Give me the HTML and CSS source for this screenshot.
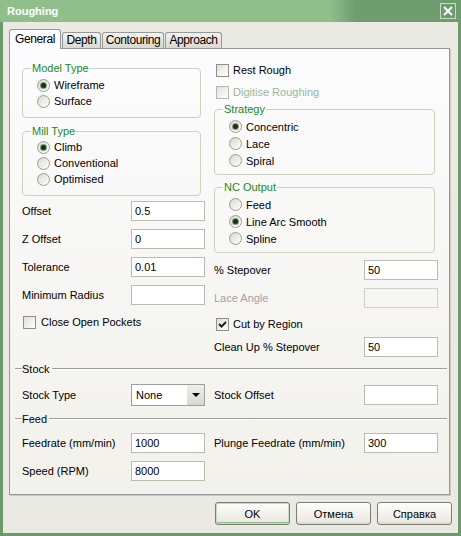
FILE: index.html
```html
<!DOCTYPE html>
<html lang="en">
<head>
    <meta charset="UTF-8">
    <title>Roughing</title>
    <link rel="stylesheet" href="styles.css">
</head>
<body>
<div class="window">
    <div class="titlebar">
        <span class="title">Roughing</span>
        <div class="close-btn">
            <svg width="10" height="10" viewBox="0 0 10 10"><path d="M1 1 L9 9 M9 1 L1 9" stroke="#fff" stroke-width="2"/></svg>
        </div>
    </div>

    <div class="frame">
        <div class="tabs">
            <div class="tab active t-general">General</div>
            <div class="tab t-depth">Depth</div>
            <div class="tab t-contour">Contouring</div>
            <div class="tab t-approach">Approach</div>
        </div>

        <div class="page">
            <div class="cols">
                <!-- left column -->
                <div class="col col-left">
                    <fieldset class="group group-left">
                        <legend>Model Type</legend>
                        <div class="opt"><span class="radio checked"></span>Wireframe</div>
                        <div class="opt"><span class="radio"></span>Surface</div>
                    </fieldset>

                    <fieldset class="group group-left group-mill">
                        <legend>Mill Type</legend>
                        <div class="opt"><span class="radio checked"></span>Climb</div>
                        <div class="opt"><span class="radio"></span>Conventional</div>
                        <div class="opt"><span class="radio"></span>Optimised</div>
                    </fieldset>

                    <div class="field mt5"><span>Offset</span><div class="edit">0.5</div></div>
                    <div class="field mt8"><span>Z Offset</span><div class="edit">0</div></div>
                    <div class="field mt8"><span>Tolerance</span><div class="edit">0.01</div></div>
                    <div class="field mt8"><span>Minimum Radius</span><div class="edit"></div></div>

                    <div class="opt check mt9"><span class="box"></span>Close Open Pockets</div>
                </div>

                <!-- right column -->
                <div class="col col-right">
                    <div class="opt check"><span class="box"></span>Rest Rough</div>
                    <div class="opt check mt6 dim-green"><span class="box box-off"></span>Digitise Roughing</div>

                    <fieldset class="group group-right mt3">
                        <legend>Strategy</legend>
                        <div class="opt"><span class="radio checked"></span>Concentric</div>
                        <div class="opt"><span class="radio"></span>Lace</div>
                        <div class="opt"><span class="radio"></span>Spiral</div>
                    </fieldset>

                    <fieldset class="group group-right mt6">
                        <legend>NC Output</legend>
                        <div class="opt"><span class="radio"></span>Feed</div>
                        <div class="opt"><span class="radio checked"></span>Line Arc Smooth</div>
                        <div class="opt"><span class="radio"></span>Spline</div>
                    </fieldset>

                    <div class="field mt7"><span>% Stepover</span><div class="edit">50</div></div>
                    <div class="field mt8 dim"><span>Lace Angle</span><div class="edit off"></div></div>

                    <div class="opt check mt8">
                        <span class="box"><svg width="9" height="9" viewBox="0 0 9 9"><path d="M1 4 L3.5 6.5 L8 2" stroke="#1b2a18" stroke-width="2" fill="none"/></svg></span>Cut by Region
                    </div>
                    <div class="field mt5"><span>Clean Up % Stepover</span><div class="edit">50</div></div>
                </div>
            </div>

            <div class="sep mt5"><span>Stock</span></div>
            <div class="row mt9">
                <div class="field tall">
                    <span>Stock Type</span>
                    <div class="combo"><span class="combo-text">None</span><span class="combo-btn"></span></div>
                </div>
                <div class="field tall"><span>Stock Offset</span><div class="edit"></div></div>
            </div>

            <div class="sep mt6"><span>Feed</span></div>
            <div class="row mt8">
                <div class="field"><span>Feedrate (mm/min)</span><div class="edit">1000</div></div>
                <div class="field"><span>Plunge Feedrate (mm/min)</span><div class="edit">300</div></div>
            </div>
            <div class="row mt8">
                <div class="field"><span>Speed (RPM)</span><div class="edit">8000</div></div>
                <div></div>
            </div>
        </div>

        <div class="buttons">
            <div class="btn default">OK</div>
            <div class="btn">Отмена</div>
            <div class="btn">Справка</div>
        </div>
    </div>
</div>
</body>
</html>
```

FILE: styles.css
```css
body {
    margin: 0;
    font-family: "Liberation Sans", Arial, sans-serif;
    font-size: 11px;
    color: #000;
}

.window {
    width: 461px;
    height: 536px;
    display: flex;
    flex-direction: column;
}

/* title bar */
.titlebar {
    height: 22px;
    flex: none;
    display: flex;
    align-items: center;
    justify-content: space-between;
    padding: 0 5px 0 7px;
    background: linear-gradient(to right, #90bf8c 0, #90bf8c 330px, #6e9c6e 356px, #6e9c6e 100%);
}

.title {
    color: #fff;
    font-weight: bold;
}

.close-btn {
    width: 16px;
    height: 16px;
    box-sizing: border-box;
    border: 1px solid #c7dcc5;
    display: flex;
    align-items: center;
    justify-content: center;
}

.frame {
    flex: 1;
    border: 3px solid #6d9a6d;
    border-top: 0;
    background: #ebeae2;
    padding: 7px 0 0 6px;
}

/* tabs */
.tabs {
    display: flex;
    align-items: flex-start;
    height: 20px;
}

.tab {
    height: 16px;
    box-sizing: border-box;
    margin-top: 3px;
    margin-left: 1px;
    border: 1px solid #919b9c;
    border-bottom: 0;
    border-radius: 3px 3px 0 0;
    background: linear-gradient(#f3f2ec, #dbd9ce);
    text-align: center;
    line-height: 15px;
    font-size: 12px;
    letter-spacing: -0.4px;
}

.tab.active {
    height: 20px;
    margin-top: 0;
    margin-left: 0;
    background: #fcfcfe;
    line-height: 18px;
    position: relative;
    z-index: 1;
}

.t-general { width: 52px; }
.t-depth { width: 39px; }
.t-contour { width: 62px; }
.t-approach { width: 57px; }

/* tab page */
.page {
    width: 441px;
    height: 447px;
    box-sizing: border-box;
    margin-top: -1px;
    border: 1px solid #919b9c;
    box-shadow: 1px 1px 0 #cdcabb;
    background: linear-gradient(#fcfcfe, #f2f1eb);
    padding: 13px 11px 0 12px;
}

.cols, .row {
    display: grid;
    grid-template-columns: 183px 224px;
    column-gap: 9px;
    align-items: start;
}

.row {
    align-items: center;
}

.col {
    display: flex;
    flex-direction: column;
}

/* group boxes */
.group {
    margin: 0;
    box-sizing: border-box;
    border: 1px solid #d0d0bf;
    border-radius: 4px;
    padding: 2px 0 8px 14px;
}

.group legend {
    color: #1a8a1a;
    padding: 0 1px;
    margin-left: -6px;
    line-height: 13px;
}

.group-left { width: 179px; }
.group-mill { margin-top: 7px; padding-top: 1px; }
.group-right { width: 221px; padding-bottom: 5px; }

/* radio / check rows */
.opt {
    display: flex;
    align-items: center;
    height: 16px;
}

.col-right .group .opt {
    height: 17px;
}

.radio {
    width: 13px;
    height: 13px;
    flex: none;
    box-sizing: border-box;
    border: 1px solid #9d9c93;
    border-radius: 50%;
    background: linear-gradient(135deg, #d9d8ce, #fff);
    margin-right: 4px;
    position: relative;
}

.radio.checked::after {
    content: "";
    position: absolute;
    left: 3px;
    top: 3px;
    width: 5px;
    height: 5px;
    border-radius: 50%;
    background: #1c2f1a;
    box-shadow: 0 0 0 1px #7f9e79;
}

.check {
    padding-left: 2px;
}

.col-left .check {
    padding-left: 1px;
}

.box {
    width: 13px;
    height: 13px;
    flex: none;
    box-sizing: border-box;
    border: 1px solid #8f8f8a;
    background: linear-gradient(135deg, #e0dfd8, #fff);
    margin-right: 4px;
    display: flex;
    align-items: center;
    justify-content: center;
}

.col-left .box {
    margin-right: 5px;
}

.box-off {
    border-color: #b7b8b0;
}

.dim-green { color: #98b896; }
.dim { color: #a3a39c; }

/* label + edit rows */
.field {
    display: flex;
    align-items: center;
    justify-content: space-between;
    height: 20px;
}

.field.tall {
    height: 22px;
}

.edit {
    width: 74px;
    height: 20px;
    box-sizing: border-box;
    border: 1px solid #b9bdb0;
    background: #fff;
    padding-left: 3px;
    line-height: 18px;
}

.edit.off {
    background: transparent;
    border-color: #cfd0c6;
}

.combo {
    width: 74px;
    height: 22px;
    box-sizing: border-box;
    border: 1px solid #9da19a;
    background: #fff;
    display: flex;
}

.combo-text {
    flex: 1;
    padding-left: 4px;
    line-height: 20px;
}

.combo-btn {
    width: 17px;
    background: linear-gradient(#efeee9, #d9d8cf);
    display: flex;
    align-items: center;
    justify-content: center;
}

.combo-btn::after {
    content: "";
    border-left: 4px solid transparent;
    border-right: 4px solid transparent;
    border-top: 4px solid #000;
}

/* etched section headers */
.sep {
    display: flex;
    align-items: center;
    height: 13px;
    margin-left: -7px;
    margin-right: -9px;
}

.sep::before,
.sep::after {
    content: "";
    border-top: 1px solid #a09f98;
    border-bottom: 1px solid #fff;
}

.sep::before {
    width: 7px;
}

.sep::after {
    flex: 1;
    margin-left: 2px;
}

.mt3 { margin-top: 3px; }
.mt5 { margin-top: 5px; }
.mt6 { margin-top: 6px; }
.mt7 { margin-top: 7px; }
.mt8 { margin-top: 8px; }
.mt9 { margin-top: 9px; }

/* dialog buttons */
.buttons {
    display: flex;
    justify-content: flex-end;
    gap: 6px;
    margin-top: 7px;
    padding-right: 6px;
}

.btn {
    width: 75px;
    height: 23px;
    box-sizing: border-box;
    border: 1px solid #7b7d73;
    border-radius: 3px;
    background: linear-gradient(#fdfdfb, #eceae2 85%, #d9d7cc);
    display: flex;
    align-items: center;
    justify-content: center;
}

.btn.default {
    box-shadow: inset 0 0 0 1px #c3dcbf, inset 0 -2px 0 #92bd8e;
}
```
